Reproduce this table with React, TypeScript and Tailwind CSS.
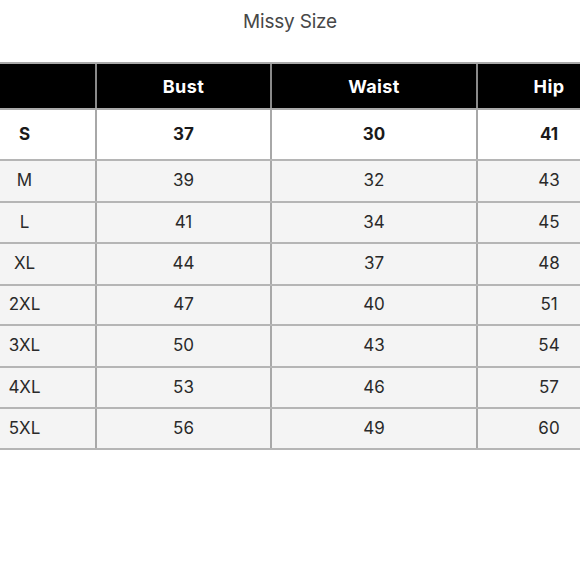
import React from "react";

const rows = [
  { s: "S", b: "37", w: "30", h: "41", cls: "h-[51px] bg-white font-bold text-[#1a1a1a] text-[17px]" },
  { s: "M", b: "39", w: "32", h: "43", cls: "h-[42px] bg-[#f4f4f4] text-[#2a2a2a] text-[17px]" },
  { s: "L", b: "41", w: "34", h: "45", cls: "h-[41px] bg-[#f4f4f4] text-[#2a2a2a] text-[17px]" },
  { s: "XL", b: "44", w: "37", h: "48", cls: "h-[42px] bg-[#f4f4f4] text-[#2a2a2a] text-[17px]" },
  { s: "2XL", b: "47", w: "40", h: "51", cls: "h-[40px] bg-[#f4f4f4] text-[#2a2a2a] text-[17px]" },
  { s: "3XL", b: "50", w: "43", h: "54", cls: "h-[42px] bg-[#f4f4f4] text-[#2a2a2a] text-[17px]" },
  { s: "4XL", b: "53", w: "46", h: "57", cls: "h-[41px] bg-[#f4f4f4] text-[#2a2a2a] text-[17px]" },
  { s: "5XL", b: "56", w: "49", h: "60", cls: "h-[41px] bg-[#f4f4f4] text-[#2a2a2a] text-[17px]" },
];

const grid = "grid grid-cols-[97px_175px_206px_142px] w-[620px]";

export default function App() {
  return (
    <div className="w-[580px] h-[580px] bg-white overflow-hidden" style={{ fontFamily: "Inter, 'Noto Sans', sans-serif" }}>
      <div className="h-[62px] pt-[8px] text-center text-[19px] text-[#474747] font-normal tracking-[-0.2px]">
        Missy Size
      </div>
      <div className="w-[620px]">
        <div className={`${grid} h-[48px] bg-black border-y-2 border-[#a9a9a9] text-white font-bold text-[18px] tracking-[0.4px]`}>
          <div className="border-r-2 border-[#8a8a8a]" />
          <div className="flex items-center justify-center border-r-2 border-[#8a8a8a]">Bust</div>
          <div className="flex items-center justify-center border-r-2 border-[#8a8a8a]">Waist</div>
          <div className="flex items-center justify-center">Hip</div>
        </div>
        {rows.map((r) => (
          <div key={r.s} className={`${grid} ${r.cls} border-b-2 border-[#b5b5b5]`}>
            <div className="flex items-center justify-center pr-[46px] border-r-2 border-[#a8a8a8]">{r.s}</div>
            <div className="flex items-center justify-center border-r-2 border-[#a8a8a8]">{r.b}</div>
            <div className="flex items-center justify-center border-r-2 border-[#a8a8a8]">{r.w}</div>
            <div className="flex items-center justify-center">{r.h}</div>
          </div>
        ))}
      </div>
    </div>
  );
}
